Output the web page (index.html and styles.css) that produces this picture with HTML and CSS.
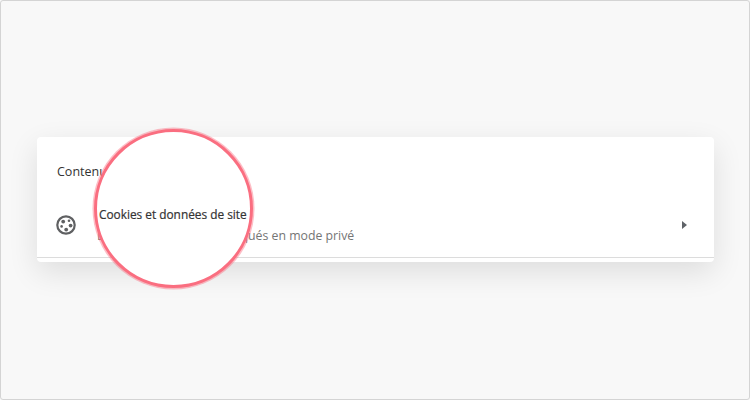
FILE: index.html
```html
<!DOCTYPE html>
<html lang="fr">
<head>
    <meta charset="UTF-8">
    <meta name="viewport" content="width=device-width, initial-scale=1.0">
    <title>Cookies et données de site</title>
    <link rel="stylesheet" href="styles.css">
</head>
<body>
    <div class="frame">
        <div class="card">
            <h2 class="card-title">Contenu</h2>
            <div class="row">
                <svg class="cookie-icon" width="20" height="20" viewBox="0 0 20 20">
                    <circle cx="10" cy="10" r="8.7" fill="none" stroke="#5f6062" stroke-width="2.2"/>
                    <circle cx="7.2" cy="6.6" r="1.9" fill="#5f6062"/>
                    <circle cx="13" cy="5.8" r="1.3" fill="#5f6062"/>
                    <circle cx="5.6" cy="11.4" r="1.3" fill="#5f6062"/>
                    <circle cx="10.2" cy="14.6" r="1.9" fill="#5f6062"/>
                    <circle cx="14.6" cy="10.6" r="1.9" fill="#5f6062"/>
                </svg>
                <div class="row-text">
                    <div class="row-sub">Les cookies tiers sont bloqués en mode privé</div>
                </div>
                <div class="arrow"></div>
            </div>
            <div class="divider"></div>
        </div>

        <!-- loupe over the row title -->
        <div class="lens">
            <div class="lens-title">Cookies et données de site</div>
        </div>
    </div>
</body>
</html>
```

FILE: styles.css
```css
* {
    margin: 0;
    padding: 0;
    box-sizing: border-box;
    font-family: 'Open Sans', 'Noto Sans', sans-serif;
}

body {
    width: 750px;
    height: 400px;
    overflow: hidden;
    background: #f8f8f8;
}

.frame {
    position: relative;
    width: 750px;
    height: 400px;
    padding: 136px 36px 0;
    background: #f8f8f8;
    border: 1px solid #d4d4d4;
    border-radius: 3px;
}

.card {
    width: 677px;
    height: 125px;
    background: #fff;
    border-radius: 4px;
    box-shadow: 0 10px 30px rgba(0, 0, 0, 0.11);
}

.card-title {
    padding: 26px 20px 0;
    height: 60px;
    font-size: 12.5px;
    line-height: 18px;
    font-weight: 400;
    color: #333;
}

.row {
    display: flex;
    align-items: center;
    height: 60px;
    padding: 0 27px 0 19px;
}

.cookie-icon {
    flex-shrink: 0;
    margin-bottom: 4px;
    margin-right: 21px;
}

.row-text {
    flex: 1;
    padding-top: 18px;
}

.row-sub {
    font-size: 12.3px;
    line-height: 18px;
    color: #757575;
}

.arrow {
    width: 0;
    height: 0;
    margin-bottom: 4px;
    border-left: 5px solid #5f6368;
    border-top: 4.5px solid transparent;
    border-bottom: 4.5px solid transparent;
}

.divider {
    height: 1px;
    background: #dcdcdc;
}

.lens {
    position: absolute;
    left: 93px;
    top: 128px;
    width: 159px;
    height: 159px;
    background: #fff;
    border: 3px solid #fa6e80;
    border-radius: 50%;
    box-shadow: 0 0 0 1.5px rgba(250, 110, 128, 0.45);
}

.lens-title {
    position: absolute;
    left: 2px;
    top: 74px;
    font-size: 11.85px;
    line-height: 17px;
    white-space: nowrap;
    color: #333;
    -webkit-text-stroke: 0.2px #333;
}
```
